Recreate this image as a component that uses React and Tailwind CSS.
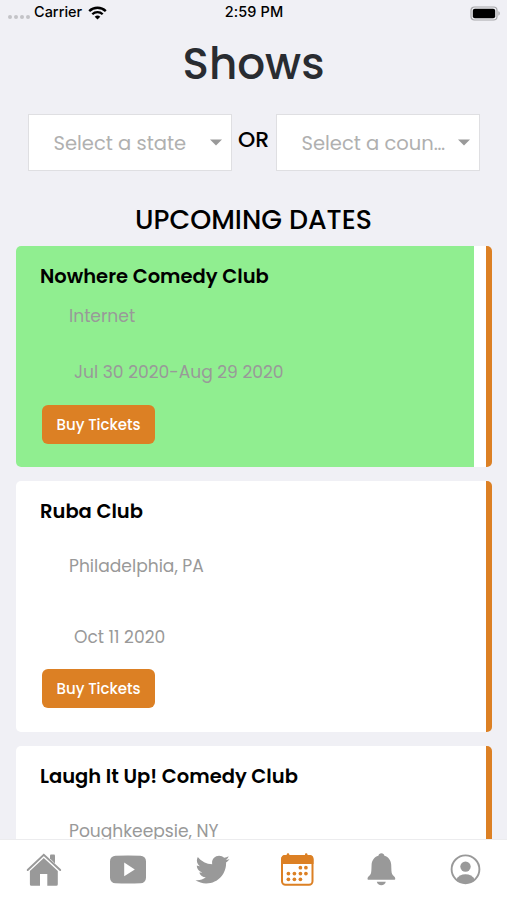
import { IoLogoTwitter } from 'react-icons/io';

const shows = [
  { id: 1, venue: 'Nowhere Comedy Club', place: 'Internet', date: 'Jul 30 2020-Aug 29 2020', online: true },
  { id: 2, venue: 'Ruba Club', place: 'Philadelphia, PA', date: 'Oct 11 2020' },
  { id: 3, venue: 'Laugh It Up! Comedy Club', place: 'Poughkeepsie, NY' },
];

const HomeIcon = ({ className }) => (
  <svg className={className} viewBox="0 0 36 36" fill="currentColor">
    <path d="M17.8 6 31.8 19v13.2a1.5 1.5 0 0 1-1.5 1.5h-9V22H14v11.7H5.4A1.5 1.5 0 0 1 3.9 32.2V19Z" />
    <path d="M24 6.5V3.4a1 1 0 0 1 1-1h3a1 1 0 0 1 1 1v8Z" />
    <path d="M1.7 18 17.8 2.7 34.2 18" fill="none" stroke="currentColor" strokeWidth="1.9" strokeLinecap="round" />
  </svg>
);

const VideoIcon = ({ className }) => (
  <svg className={className} viewBox="0 0 36 36" fill="currentColor">
    <path
      fillRule="evenodd"
      d="M5.5 3.7Q18 3.2 30.5 3.7A5.5 5.5 0 0 1 36 9.2Q36.4 17.5 36 25.8A5.5 5.5 0 0 1 30.5 31.3Q18 31.8 5.5 31.3A5.5 5.5 0 0 1 0 25.8Q-.4 17.5 0 9.2A5.5 5.5 0 0 1 5.5 3.7ZM14.2 10.6V24.3L24.8 17.5Z"
    />
  </svg>
);

const TwitterIcon = ({ className }) => (
  <span className={`flex justify-center pt-px ${className}`}>
    <IoLogoTwitter className="w-[37px] h-[37px] shrink-0 -mt-[2px]" />
  </span>
);

const calendarDots = [
  [21.4, 15.7],
  [26.9, 15.7],
  [9.4, 21.6],
  [15.4, 21.6],
  [21.4, 21.6],
  [26.9, 21.6],
  [9.4, 27.3],
  [15.4, 27.3],
  [21.4, 27.3],
];

const CalendarIcon = ({ className }) => (
  <svg className={className} viewBox="0 0 36 36" fill="currentColor">
    <rect x="3" y="4" width="30.5" height="28.8" rx="3.5" fill="none" stroke="currentColor" strokeWidth="2" />
    <path d="M2.2 12V7A4 4 0 0 1 6 3h24.5a4 4 0 0 1 4 4v5Z" />
    <rect x="7.8" y="1.3" width="2.4" height="4" rx="1" />
    <rect x="26" y="1.3" width="2.4" height="4" rx="1" />
    {calendarDots.map(([x, y]) => (
      <circle key={`${x}-${y}`} cx={x} cy={y} r="1.85" />
    ))}
  </svg>
);

const BellIcon = ({ className }) => (
  <svg className={className} viewBox="0 0 36 36" fill="currentColor">
    <path d="M18.4 1.2c1.6 0 2.8 1 3 2.6 4.3 1.3 6.6 4.8 6.8 9 .2 4.3.1 7.6.9 9.3.8 1.7 3.2 2.8 3.2 4.6 0 .7-.5 1-1.1 1H5.6c-.7 0-1.1-.4-1.1-1 0-1.800 2.300-2.900 3.200-4.600.8-1.700.7-5 .9-9.300.2-4.200 2.500-7.700 6.800-9 .2-1.600 1.400-2.600 3-2.600Z" />
    <path d="M13.8 29.8h9c-.5 2.2-2.2 3.5-4.5 3.5s-4-1.3-4.5-3.5Z" />
  </svg>
);

const AccountIcon = ({ className }) => (
  <svg className={className} viewBox="0 0 36 36" fill="currentColor">
    <circle cx="18.5" cy="17.3" r="13.9" fill="none" stroke="currentColor" strokeWidth="1.9" />
    <circle cx="18.5" cy="14.6" r="5.2" />
    <path d="M9.2 27.4c1.8-3.4 5.4-5.2 9.3-5.2s7.5 1.8 9.3 5.2a13.7 13.7 0 0 1-18.6 0Z" />
  </svg>
);

const tabs = [
  { name: 'Home', Icon: HomeIcon },
  { name: 'Videos', Icon: VideoIcon },
  { name: 'Twitter', Icon: TwitterIcon },
  { name: 'Shows', Icon: CalendarIcon, active: true },
  { name: 'Alerts', Icon: BellIcon },
  { name: 'Account', Icon: AccountIcon },
];

const StatusBar = () => (
  <div className="grid grid-cols-3 items-center h-[26px] shrink-0 pl-2 pr-[6px] font-['Inter',sans-serif] text-[14.5px] font-medium text-black">
    <div className="flex items-center">
      <div className="flex gap-[2px] mt-2 mr-[4px]">
        {[1, 2, 3, 4].map((i) => (
          <span key={i} className="w-[4px] h-[4px] rounded-full bg-[#c3c3c7]"></span>
        ))}
      </div>
      <span className="pb-[2px]">Carrier</span>
      <svg className="w-[19px] h-[14px] ml-[6px]" viewBox="0 0 19 14" fill="none" stroke="#000">
        <path d="M1.2 5.2a11.8 11.8 0 0 1 16.6 0" strokeWidth="2.4" />
        <path d="M4.3 8.3a7.4 7.4 0 0 1 10.4 0" strokeWidth="2.3" />
        <path d="M9.5 13.6 6.7 10.8a4 4 0 0 1 5.6 0Z" fill="#000" stroke="none" />
      </svg>
    </div>
    <span className="pb-[2px] pr-px text-center whitespace-nowrap tracking-[0.1px]">2:59 PM</span>
    <svg className="w-[31px] h-[15px] justify-self-end" viewBox="0 0 31 15">
      <rect x="1" y="1" width="26" height="13" rx="3.5" fill="none" stroke="#a6a6a9" strokeWidth="1.2" />
      <rect x="2.8" y="2.8" width="22.4" height="9.4" rx="2" fill="#000" />
      <path d="M28.4 5.3c1.8.6 1.8 3.8 0 4.4Z" fill="#a6a6a9" />
    </svg>
  </div>
);

const Select = ({ label }) => (
  <div className="flex items-center justify-between w-[204px] h-[57px] pl-[25px] pr-[9px] bg-white border border-[#dfdfe2]">
    <span className="pt-[2px] text-[19.5px] text-[#b0b0b0] whitespace-nowrap">{label}</span>
    <svg className="w-3 h-[7px] shrink-0" viewBox="0 0 12 7">
      <path d="M0 .5h12L6 6.5Z" fill="#999" />
    </svg>
  </div>
);

const ShowCard = ({ show }) => (
  <div
    className={`flex shrink-0 rounded-[5px] overflow-hidden bg-white border-r-[6.5px] border-[#dc8024] ${
      show.online ? 'h-[221px] pr-3' : 'h-[251px]'
    }`}
  >
    <div className={`flex-1 flex flex-col items-start pl-[24.5px] pt-4 ${show.online ? 'bg-[#90ee90]' : ''}`}>
      <h3 className="text-[19.5px] leading-[30px] font-semibold text-black">{show.venue}</h3>
      <p className={`ml-[29px] text-[17.1px] leading-[26px] text-[#999] ${show.online ? 'mt-[11px]' : 'mt-[26px]'}`}>
        {show.place}
      </p>
      {show.date && (
        <>
          <p className={`ml-[34px] text-[17.1px] leading-[26px] text-[#999] ${show.online ? 'mt-[30px]' : 'mt-[45px]'}`}>
            {show.date}
          </p>
          <button
            className={`ml-[2px] w-[113px] h-[39px] rounded-[6px] bg-[#dc8024] pt-[2px] text-[15px] tracking-[-0.05px] font-medium text-white ${
              show.online ? 'mt-[20px]' : 'mt-[19px]'
            }`}
          >
            Buy Tickets
          </button>
        </>
      )}
    </div>
  </div>
);

const TabBar = () => (
  <nav className="grid grid-cols-6 h-[61px] shrink-0 pl-[2px] bg-white border-t border-[#ececee]">
    {tabs.map(({ name, Icon, active }) => (
      <button key={name} aria-label={name} className="flex justify-center items-start pt-3">
        <Icon className={`w-9 h-9 ${active ? 'text-[#dc8024]' : 'text-[#999]'}`} />
      </button>
    ))}
  </nav>
);

export default function App() {
  return (
    <div className="flex flex-col w-[507px] h-[900px] overflow-hidden bg-[#f0f0f5] font-['Poppins','Inter',sans-serif]">
      <StatusBar />
      <main className="flex-1 min-h-0 overflow-hidden flex flex-col">
        <h1 className="mt-[8px] text-[43.7px] leading-[60px] font-medium text-center text-[#292c31]">Shows</h1>
        <div className="flex justify-center mt-[20px]">
          <Select label="Select a state" />
          <span className="w-11 pt-[11px] text-center text-[22px] leading-[30px] font-medium text-black">OR</span>
          <Select label="Select a coun…" />
        </div>
        <h2 className="mt-[29px] text-[26.8px] leading-10 font-medium text-center text-black">UPCOMING DATES</h2>
        <div className="flex flex-col gap-[14px] mt-[6px] pl-[15.5px] pr-[15px]">
          {shows.map((show) => (
            <ShowCard key={show.id} show={show} />
          ))}
        </div>
      </main>
      <TabBar />
    </div>
  );
}
